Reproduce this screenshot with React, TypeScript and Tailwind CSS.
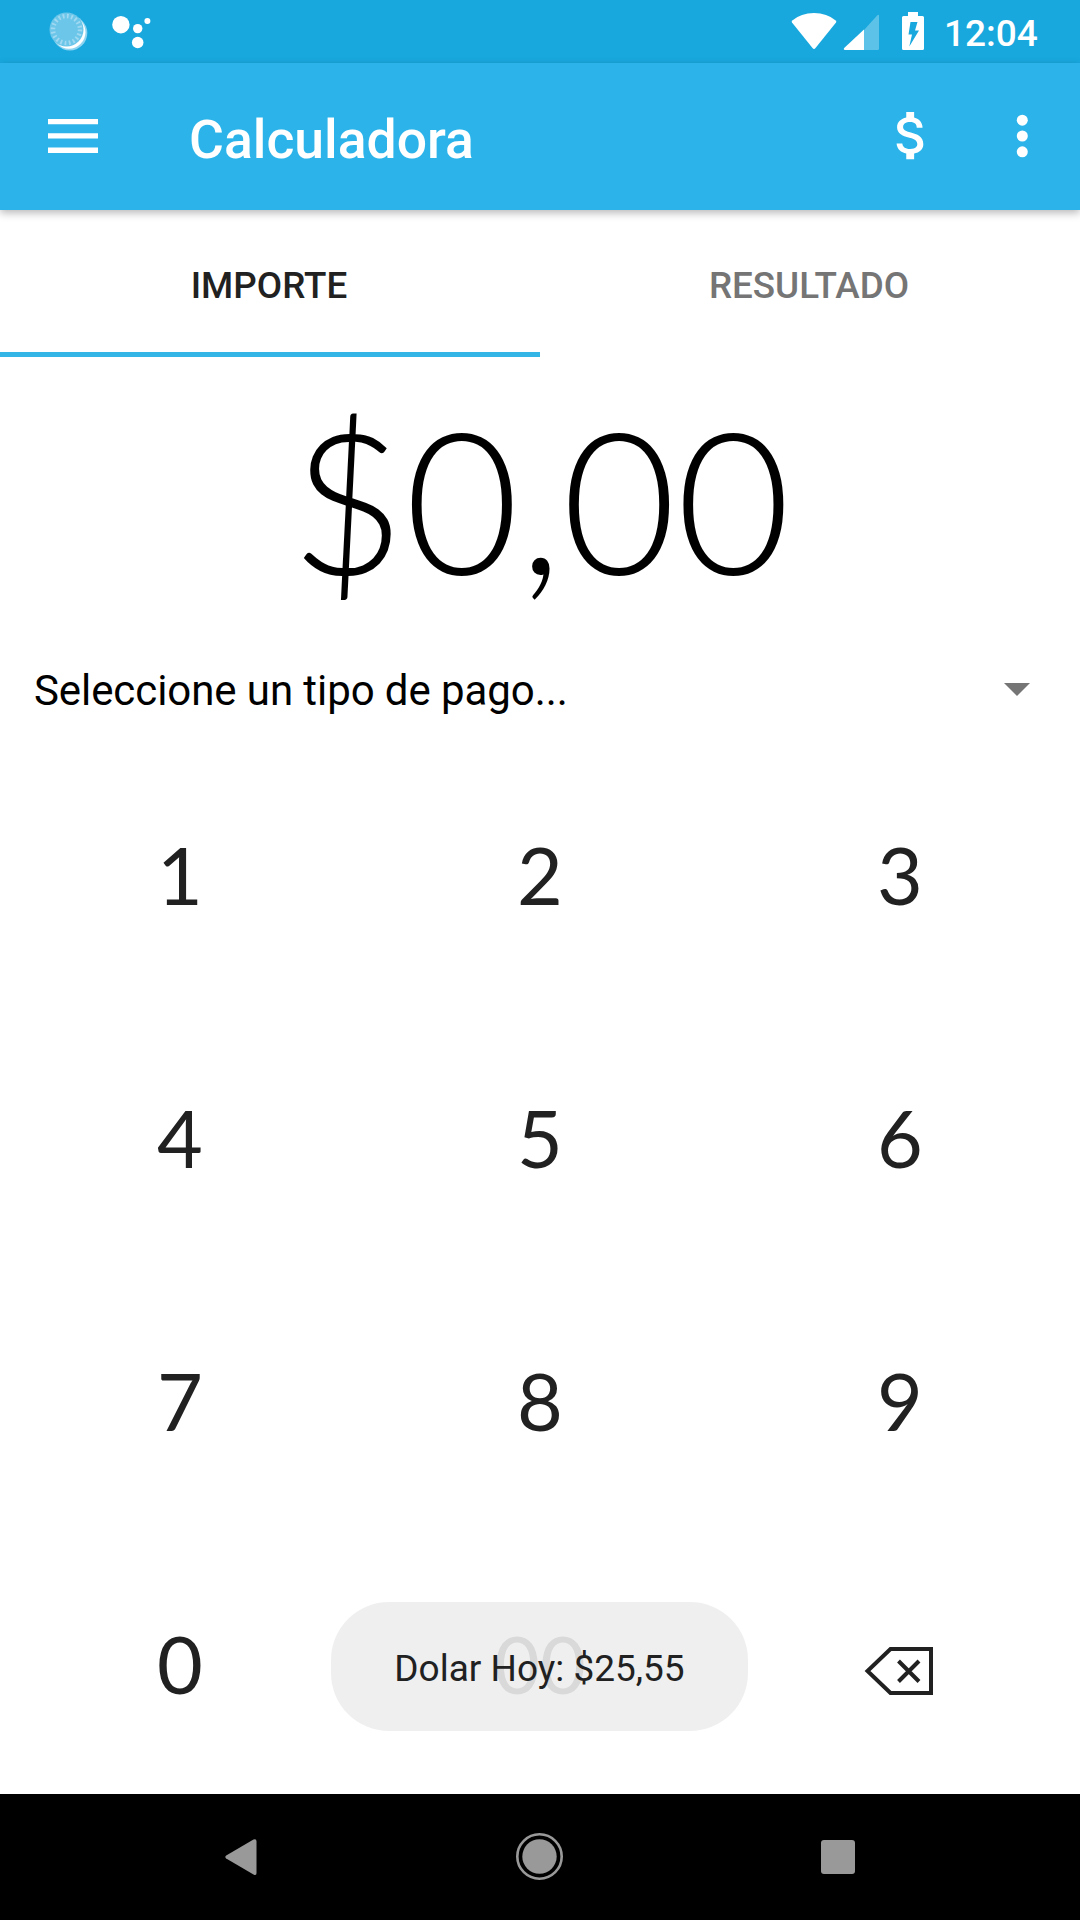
const DIGITS = ['1', '2', '3', '4', '5', '6', '7', '8', '9', '0', '00']

function StatusBar() {
  return (
    <div className="flex h-[63px] items-center bg-[#18a8de] text-white">
      {/* Notifications */}
      <svg className="h-[63px] w-[180px] shrink-0" viewBox="0 0 180 63" fill="none">
        <circle cx="69.8" cy="33" r="17.5" fill="#8fd4f0" />
        <circle cx="69" cy="32.2" r="16.5" fill="#fff" />
        <circle cx="66.5" cy="29.5" r="17" fill="#6cc6e9" />
        <circle cx="66.5" cy="29.5" r="13.5" stroke="#a0d9f1" strokeWidth="4.5" strokeDasharray="1.8 2.44" />
        <circle cx="120.9" cy="24.7" r="8.7" fill="#fff" />
        <circle cx="137.7" cy="28.6" r="4.7" fill="#fff" />
        <circle cx="137.7" cy="42.5" r="5.8" fill="#fff" />
        <circle cx="147.4" cy="21" r="3" fill="#fff" />
      </svg>
      {/* Wifi, signal and battery */}
      <svg className="ml-[600px] h-[63px] w-[160px] shrink-0" viewBox="780 0 160 63" fill="none">
        <path
          d="M792.3 20.5Q801 13 814 13T835.7 20.5Q836.8 21.5 836 22.6L815.5 48Q814 49.8 812.5 48L792 22.6Q791.2 21.5 792.3 20.5Z"
          fill="#fff"
        />
        <path d="M864 30V50h13.5q1.5 0 1.5-1.5V16q0-2-1.6-.8z" fill="#fff" fillOpacity=".3" />
        <path d="M864 29.5V50H845q-2-.3-.8-2z" fill="#fff" />
        <path
          d="M908 12h10v4h4.5q1.5 0 1.5 1.5V48.5q0 1.5-1.5 1.5h-19q-1.5 0-1.500-1.500V17.500q0-1.500 1.500-1.500H908zM910.500 22L908.500 34.500H912L909.300 46.500L919 30.500H915L917.500 22z"
          fill="#fff"
          fillRule="evenodd"
        />
      </svg>
      <span className="ml-1 pt-[3px] text-[37px] font-medium leading-none">12:04</span>
    </div>
  )
}

function AppBar() {
  return (
    <div className="z-10 flex h-[147px] shrink-0 items-center bg-[#2cb4ea] text-white shadow-[0_3px_8px_rgba(0,0,0,0.28)]">
      <svg className="mb-[2px] ml-12 h-[34px] w-[50px]" viewBox="0 0 50 34" fill="currentColor">
        <path d="M0 0h50v5.300H0zM0 14.300h50v5.300H0zM0 28.600h50v5.300H0z" />
      </svg>
      <h1 className="ml-[91px] grow pt-[7px] text-[53.500px] font-medium leading-none">Calculadora</h1>
      <svg className="mb-[2px] mr-[73px] h-[63px] w-[63px]" viewBox="0 0 24 24" fill="currentColor">
        <path d="M11.800 10.900c-2.270-.59-3-1.200-3-2.150 0-1.090 1.010-1.850 2.700-1.850 1.780 0 2.440.85 2.500 2.100h2.210c-.07-1.720-1.120-3.300-3.210-3.810V3h-3v2.160c-1.940.42-3.500 1.680-3.500 3.610 0 2.310 1.910 3.460 4.700 4.130 2.500.6 3 1.480 3 2.410 0 .69-.49 1.790-2.700 1.790-2.060 0-2.870-.92-2.980-2.100h-2.200c.12 2.190 1.760 3.420 3.680 3.830V21h3v-2.150c1.950-.37 3.500-1.500 3.500-3.550 0-2.840-2.430-3.810-4.700-4.400z" />
      </svg>
      <svg className="mb-[2px] mr-[52px] h-[44px] w-[12px]" viewBox="0 0 12 44" fill="currentColor">
        <circle cx="6.300" cy="6.200" r="5.500" />
        <circle cx="6.300" cy="22" r="5.500" />
        <circle cx="6.300" cy="37.800" r="5.500" />
      </svg>
    </div>
  )
}

function NavBar() {
  return (
    <div className="flex h-[126px] shrink-0 items-center bg-black text-[#999]">
      <svg className="ml-[225px] h-[36px] w-[32px]" viewBox="0 0 32 36" fill="currentColor">
        <path d="M1.200 16.500L28.500.6Q31.500-.6 31.500 2.500V34Q31.500 37 28.500 35.400L1.200 19.500Q-.6 18 1.200 16.500Z" />
      </svg>
      <svg className="ml-[258px] h-[50px] w-[50px]" viewBox="0 0 50 50">
        <circle cx="24.500" cy="24.500" r="22.200" fill="none" stroke="currentColor" strokeWidth="2.600" />
        <circle cx="24.500" cy="24.500" r="17.200" fill="currentColor" />
      </svg>
      <div className="ml-[256px] h-[34px] w-[34px] rounded-[3px] bg-[#999]" />
    </div>
  )
}

export default function App() {
  return (
    <div className="relative flex h-[1920px] w-[1080px] flex-col bg-white font-['Roboto',sans-serif]">
      <StatusBar />
      <AppBar />

      {/* Tabs */}
      <div className="flex h-[147px] shrink-0 text-[36.800px] font-medium">
        <button className="w-1/2 border-b-[5px] border-[#33b5e5] pr-[2px] pt-[9px] text-[#212121]">IMPORTE</button>
        <button className="w-1/2 border-b-[5px] border-transparent pr-[2px] pt-[9px] text-[#757575]">RESULTADO</button>
      </div>

      <div className="h-[283px] shrink-0 pl-px text-center font-['Lato',sans-serif] text-[197px] font-light leading-[284px] text-black">
        $0,00
      </div>

      {/* Payment type */}
      <div className="flex h-[103px] shrink-0 items-center justify-between pb-[2px] pl-[34px] pr-[50px] text-[42px] tracking-[-0.08px] text-black">
        <span>Seleccione un tipo de pago...</span>
        <svg className="mb-[2px] h-[13px] w-[26px]" viewBox="0 0 26 13" fill="#757575">
          <path d="M0 0h26L13 13z" />
        </svg>
      </div>

      {/* Keypad */}
      <div className="grid grow grid-cols-3 grid-rows-[263px_263px_263px_1fr] font-['Lato',sans-serif] text-[79px] text-[#212121]">
        {DIGITS.map((d) => (
          <button key={d} className="pt-[2px]">
            {d}
          </button>
        ))}
        <button className="flex items-center justify-center pr-[2px] pt-[15px]">
          <svg className="h-[50px] w-[70px]" viewBox="864 1646 70 50" fill="none" stroke="currentColor" strokeWidth="4">
            <path d="M890.500 1649H931V1693H890.500L867.500 1671Z" />
            <path d="M898.500 1661L919 1681.500M919 1661L898.500 1681.500" />
          </svg>
        </button>
      </div>

      <NavBar />

      {/* Toast */}
      <div className="absolute left-[331px] top-[1602px] flex h-[129px] w-[417px] items-center justify-center rounded-[58px] bg-[rgba(237,237,237,0.9)] pt-[5px] text-[37px] text-[#212121]">
        Dolar Hoy: $25,55
      </div>
    </div>
  )
}
